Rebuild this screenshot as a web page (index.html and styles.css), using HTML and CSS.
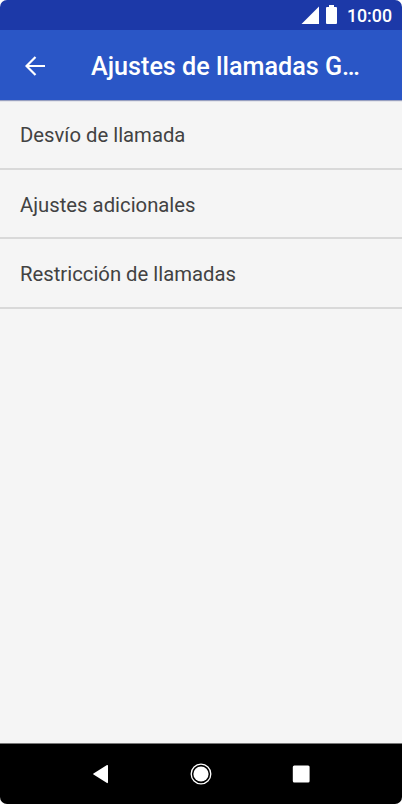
FILE: index.html
```html
<!DOCTYPE html>
<html lang="es">
<head>
<meta charset="utf-8">
<meta name="viewport" content="width=device-width, initial-scale=1">
<title>Ajustes de llamadas</title>
<link rel="stylesheet" href="styles.css">
</head>
<body>
<div class="phone">
  <div class="status">
    <svg class="signal" width="18" height="18" viewBox="0 0 18 18"><path d="M.5 18 18 .5V18Z"/></svg>
    <svg class="battery" width="11" height="19" viewBox="0 0 11 19"><path d="M3 0h5v2h2a1 1 0 0 1 1 1v15a1 1 0 0 1-1 1H1a1 1 0 0 1-1-1V3a1 1 0 0 1 1-1h2Z"/></svg>
    <span class="time">10:00</span>
  </div>
  <header class="appbar">
    <svg class="back" width="20" height="20" viewBox="0 0 20 20"><path d="M10.500 1 1.500 10l9 9M1.500 10H20"/></svg>
    <h1 class="title">Ajustes de llamadas G…</h1>
  </header>
  <main class="list">
    <div class="row">Desvío de llamada</div>
    <div class="row">Ajustes adicionales</div>
    <div class="row">Restricción de llamadas</div>
  </main>
  <nav class="nav">
    <svg width="24" height="24" viewBox="0 0 24 24"><path d="M4.500 11.400 18 3Q19 2.500 19 4V20Q19 21.500 18 21L4.500 12.600Q3.500 12 4.500 11.400Z"/></svg>
    <svg width="24" height="24" viewBox="0 0 24 24"><circle cx="12" cy="12" r="9.800" class="ring"/><circle cx="12" cy="12" r="7.600"/></svg>
    <svg width="24" height="24" viewBox="0 0 24 24"><rect x="3.800" y="3.500" width="16.800" height="17" rx="1.500"/></svg>
  </nav>
</div>
</body>
</html>
```
FILE: styles.css
```css
* { box-sizing: border-box; }
body { margin: 0; background: #fff; font-family: Roboto, sans-serif; }
svg { display: block; fill: #fff; flex: none; }
.phone {
  display: flex; flex-direction: column;
  width: 402px; height: 804px;
  overflow: hidden; border-radius: 7px;
  background: #f5f5f5;
}
.status {
  display: flex; align-items: center; justify-content: flex-end;
  height: 30px; padding-right: 10px;
  background: #1c39a8; color: #fff;
}
.signal { margin-right: 7px; }
.battery { margin: 0 9px 1px 0; }
.time { width: 46px; text-align: right; font-size: 17.800px; font-weight: 500; line-height: 20px; padding-top: 1px; }
.appbar {
  display: flex; align-items: center;
  height: 70px; padding-left: 25px;
  background: #2a56c6; color: #fff;
  box-shadow: 0 1px 1px rgba(60, 75, 140, 0.5);
}
.back { fill: none; stroke: #fff; stroke-width: 2.200; margin-top: 1px; }
.title { margin: 0 0 0 46px; font-size: 25.200px; line-height: 30px; font-weight: 500; white-space: nowrap; padding-top: 3px; }
.list { flex: 1; }
.row {
  display: flex; align-items: center;
  height: 69.500px; padding: 3px 0 0 20px;
  border-bottom: 2px solid #d9d9d9;
  color: #424242; font-size: 20.300px;
}
.nav {
  display: flex; align-items: center; justify-content: center; gap: 76px;
  height: 61px; padding-right: 1px;
  border-top: 1px solid #777; background: #000;
}
.ring { fill: none; stroke: #fff; stroke-width: 1.300; }
```
